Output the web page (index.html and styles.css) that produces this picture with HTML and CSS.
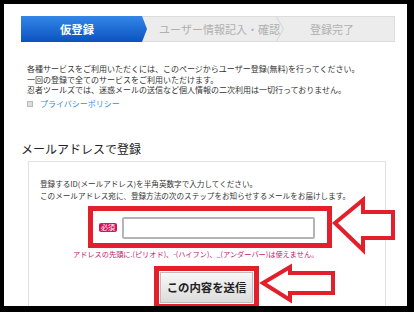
FILE: index.html
```html
<!DOCTYPE html>
<html lang="ja">
<head>
<meta charset="utf-8">
<link rel="stylesheet" href="styles.css">
</head>
<body>
<div class="frame">
  <div class="steps">
    <div class="step active">仮登録</div>
    <div class="step mid">ユーザー情報記入・確認</div>
    <div class="step last">登録完了</div>
  </div>
  <div class="intro">
    <p>各種サービスをご利用いただくには、このページからユーザー登録(無料)を行ってください。</p>
    <p>一回の登録で全てのサービスをご利用いただけます。</p>
    <p>忍者ツールズでは、迷惑メールの送信など個人情報の二次利用は一切行っておりません。</p>
  </div>
  <div class="privacy"><span class="bullet"></span><a class="link">プライバシーポリシー</a></div>
  <h2 class="heading">メールアドレスで登録</h2>
  <div class="box">
    <p class="note">登録するID(メールアドレス)を半角英数字で入力してください。</p>
    <p class="note">このメールアドレス宛に、登録方法の次のステップをお知らせするメールをお届けします。</p>
    <div class="field-frame">
      <span class="badge">必須</span>
      <span class="input"></span>
    </div>
    <p class="error">アドレスの先頭に.(ピリオド)、-(ハイフン)、_(アンダーバー)は使えません。</p>
    <div class="btn-frame"><span class="btn">この内容を送信</span></div>
  </div>
  <svg class="arrows" width="403" height="302" viewBox="0 0 403 302">
    <polygon points="331,219 359,196 359,208 389,208 389,234 359,234 359,246" />
    <polygon points="259,279 286,263 286,269 329,269 329,289 286,289 286,296" />
  </svg>
</div>
</body>
</html>
```
FILE: styles.css
```css
* { box-sizing: border-box; }
html, body { margin: 0; padding: 0; }
body {
  background: #000;
  width: 414px;
  height: 312px;
  overflow: hidden;
  font-family: "Noto Sans CJK JP", "Noto Sans", sans-serif;
}
.frame {
  position: relative;
  margin: 4px 0 0 4px;
  width: 403px;
  height: 302px;
  background: #fff;
  overflow: hidden;
  padding-top: 12px;
}
.steps {
  display: flex;
  margin-left: 17px;
  width: 374px;
  height: 26px;
  background: #ececec;
  border: 1px solid #dcdcdc;
}
.step {
  position: relative;
  display: flex;
  align-items: center;
  justify-content: center;
  height: 100%;
  font-size: 11px;
  color: #b0b0b0;
  white-space: nowrap;
}
.step.active {
  width: 126px;
  margin: -1px 0 0 -1px;
  height: 26px;
  padding-right: 14px;
  color: #fff;
  font-weight: bold;
  font-size: 11.3px;
  background: linear-gradient(#3387e8, #0b52bf);
  clip-path: polygon(0 0, calc(100% - 5px) 0, 100% 50%, calc(100% - 5px) 100%, 0 100%);
}
.step.mid {
  width: 133px;
  padding-left: 12px;
}
.step.mid::after {
  content: "";
  position: absolute;
  right: -4px;
  top: 0;
  width: 8px;
  height: 100%;
  background: #d2d2d2;
  clip-path: polygon(0 0, 1px 0, 100% 50%, 1px 100%, 0 100%, calc(100% - 1px) 50%);
}
.step.last {
  flex: 1;
  font-size: 11px;
  padding-right: 10px;
}
.intro {
  margin: 22px 0 0 23px;
  font-size: 8px;
  line-height: 10.5px;
  color: #333;
}
.intro p { margin: 0; white-space: nowrap; }
.privacy {
  display: flex;
  align-items: center;
  margin: 3.5px 0 0 23px;
  font-size: 8px;
  line-height: 10.5px;
}
.bullet {
  width: 6px;
  height: 6px;
  background: #ddd;
  border: 1px solid #bbb;
  margin-right: 7px;
}
.link { color: #3a8dd6; }
.heading {
  margin: 32px 0 0 17px;
  font-size: 12px;
  line-height: 14px;
  font-weight: normal;
  color: #222;
}
.box {
  margin: 5px 0 0 24px;
  width: 358px;
  height: 200px;
  border: 1px solid #e2e2e2;
  border-bottom: 0;
  padding: 16px 0 0 11px;
}
.note {
  margin: 0;
  font-size: 7.6px;
  line-height: 12px;
  color: #333;
  white-space: nowrap;
}
.field-frame {
  display: flex;
  align-items: center;
  margin: 4px 0 0 48px;
  width: 244px;
  height: 42px;
  border: 5px solid #e21f2a;
  padding: 2px 12px 0 6px;
}
.badge {
  background: #d6145a;
  color: #fff;
  font-size: 7px;
  line-height: 9px;
  padding: 0 2px;
  border-radius: 2px;
  margin-right: 5px;
}
.input {
  flex: 1;
  height: 22px;
  border: 2px solid #b4b4b4;
  border-radius: 2px;
  background: #fff;
}
.error {
  margin: 1px 0 0 33px;
  font-size: 7.2px;
  line-height: 10px;
  color: #c4146a;
  white-space: nowrap;
}
.btn-frame {
  margin: 7px 0 0 114px;
  width: 105px;
  height: 43px;
  border: 5px solid #e21f2a;
  padding: 1px;
}
.btn {
  display: flex;
  align-items: center;
  justify-content: center;
  height: 100%;
  background: linear-gradient(#f7f7f7, #dcdcdc);
  border: 1px solid #bdbdbd;
  font-size: 11.4px;
  font-weight: bold;
  color: #222;
  white-space: nowrap;
}
.arrows {
  position: absolute;
  left: 0;
  top: 0;
  pointer-events: none;
}
.arrows polygon {
  fill: #fff;
  stroke: #e21f2a;
  stroke-width: 4;
  stroke-linejoin: miter;
}
```
